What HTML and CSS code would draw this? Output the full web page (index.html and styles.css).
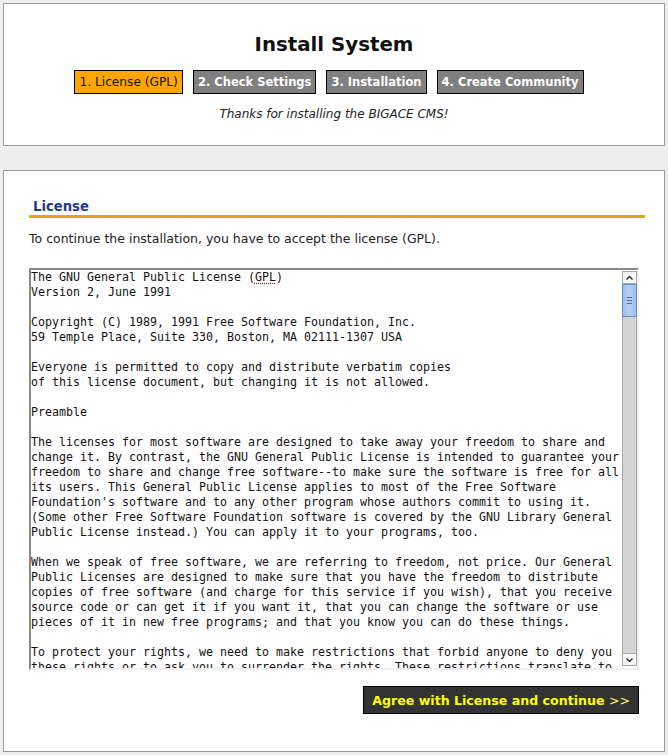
FILE: index.html
```html
<!DOCTYPE html>
<html lang="en">
<head>
<meta charset="utf-8">
<title>Install System</title>
<link rel="stylesheet" href="styles.css">
</head>
<body>
<div class="header">
  <h1 class="title">Install System</h1>
  <div class="steps">
    <span class="step step-active">1. License (GPL)</span>
    <span class="step">2. Check Settings</span>
    <span class="step">3. Installation</span>
    <span class="step">4. Create Community</span>
  </div>
  <p class="thanks">Thanks for installing the BIGACE CMS!</p>
</div>

<div class="main">
  <h2 class="section-title">License</h2>
  <p class="intro">To continue the installation, you have to accept the license (GPL).</p>
  <div class="licensebox">
    <div class="licensetext">The GNU General Public License (<span class="spell">GPL</span>)
Version 2, June 1991

Copyright (C) 1989, 1991 Free Software Foundation, Inc.
59 Temple Place, Suite 330, Boston, MA 02111-1307 USA

Everyone is permitted to copy and distribute verbatim copies
of this license document, but changing it is not allowed.

Preamble

The licenses for most software are designed to take away your freedom to share and
change it. By contrast, the GNU General Public License is intended to guarantee your
freedom to share and change free software--to make sure the software is free for all
its users. This General Public License applies to most of the Free Software
Foundation's software and to any other program whose authors commit to using it.
(Some other Free Software Foundation software is covered by the GNU Library General
Public License instead.) You can apply it to your programs, too.

When we speak of free software, we are referring to freedom, not price. Our General
Public Licenses are designed to make sure that you have the freedom to distribute
copies of free software (and charge for this service if you wish), that you receive
source code or can get it if you want it, that you can change the software or use
pieces of it in new free programs; and that you know you can do these things.

To protect your rights, we need to make restrictions that forbid anyone to deny you
these rights or to ask you to surrender the rights. These restrictions translate to
certain responsibilities for you if you distribute copies of the software, or if you
modify it.</div>
    <div class="scrollbar">
      <div class="sb-btn sb-up">
        <svg width="7" height="4" viewBox="0 0 7 4"><polyline points="0.5,3.5 3.5,0.5 6.5,3.5" fill="none" stroke="#222" stroke-width="1.3"/></svg>
      </div>
      <div class="sb-thumb">
        <span class="grip"></span><span class="grip"></span><span class="grip"></span>
      </div>
      <div class="sb-track"></div>
      <div class="sb-btn sb-down">
        <svg width="7" height="4" viewBox="0 0 7 4"><polyline points="0.5,0.5 3.5,3.5 6.5,0.5" fill="none" stroke="#222" stroke-width="1.3"/></svg>
      </div>
    </div>
  </div>
  <div class="actions">
    <button class="agree" type="button">Agree with License and continue <span class="arrows">&gt;&gt;</span></button>
  </div>
</div>
</body>
</html>
```

FILE: styles.css
```css
html, body {
  margin: 0;
  padding: 0;
}

body {
  background: #eeeeee;
  padding: 3px;
  font-family: "DejaVu Sans", Verdana, sans-serif;
  color: #222;
}

.header {
  background: #ffffff;
  border: 1px solid #999999;
  padding: 29px 0 23px;
  text-align: center;
}

.title {
  margin: 0;
  font-size: 19.8px;
  line-height: 24px;
  font-weight: bold;
  color: #111;
}

.steps {
  display: flex;
  justify-content: center;
  margin-top: 13px;
}

.step {
  margin-right: 10px;
  padding: 3px 4px;
  border: 1px solid #000;
  background: #808080;
  color: #fff;
  font-weight: bold;
  font-size: 11.5px;
  line-height: 16px;
  white-space: nowrap;
}

.step-active {
  background: #ffa500;
  color: #111;
  font-weight: normal;
  font-size: 12.2px;
}

.thanks {
  margin: 13px 0 0;
  font-size: 12px;
  line-height: 15px;
  font-style: italic;
  color: #222;
}

.main {
  background: #ffffff;
  border: 1px solid #999999;
  margin-top: 24px;
  padding: 27px 19px 37px 25px;
}

.section-title {
  margin: 0;
  padding-left: 4px;
  font-size: 13.2px;
  line-height: 17px;
  font-weight: bold;
  color: #1e3a8c;
  border-bottom: 3px solid #e2a70c;
}

.intro {
  margin: 13px 0 0;
  font-size: 12.5px;
  line-height: 16px;
  color: #222;
}

.licensebox {
  display: flex;
  width: 610px;
  height: 402px;
  box-sizing: border-box;
  margin-top: 21px;
  border-style: solid;
  border-width: 2px;
  border-color: #888888 #f0f0f0 #f0f0f0 #888888;
  background: #fff;
}

.licensetext {
  flex: 1;
  overflow: hidden;
  padding: 0;
  white-space: pre;
  font-family: "DejaVu Sans Mono", monospace;
  font-size: 11.63px;
  line-height: 15px;
  color: #111;
}

.spell {
  text-decoration: underline dotted #e00000;
  text-underline-offset: 2px;
}

.scrollbar {
  width: 15px;
  box-sizing: border-box;
  display: flex;
  flex-direction: column;
  padding: 1px 0 2px;
  background: #ffffff;
}

.sb-btn {
  height: 13px;
  box-sizing: border-box;
  border: 1px solid #a6a6a6;
  background: #f6f6f6;
  display: flex;
  align-items: center;
  justify-content: center;
}

.sb-thumb {
  height: 33px;
  box-sizing: border-box;
  border: 1px solid #6a8cc6;
  background: linear-gradient(to right, #9fbdeb, #b5cdf2 50%, #9fbdeb);
  display: flex;
  flex-direction: column;
  align-items: center;
  justify-content: center;
  gap: 2px;
}

.grip {
  display: block;
  width: 5px;
  height: 1px;
  background: #4b6aa2;
}

.sb-track {
  flex: 1;
  background: #d5d4d2;
  border-left: 1px solid #a6a6a6;
  border-right: 1px solid #a6a6a6;
}

.actions {
  width: 610px;
  display: flex;
  justify-content: flex-end;
  margin-top: 16px;
}

.agree {
  margin: 0;
  padding: 6px 8px 4px;
  border: 1px solid #000;
  background: #333333;
  color: #ffff00;
  font-family: "DejaVu Sans", Verdana, sans-serif;
  font-size: 12.6px;
  line-height: 16px;
  font-weight: bold;
  cursor: pointer;
}

.arrows {
  font-weight: normal;
  color: #ffff66;
}
```
